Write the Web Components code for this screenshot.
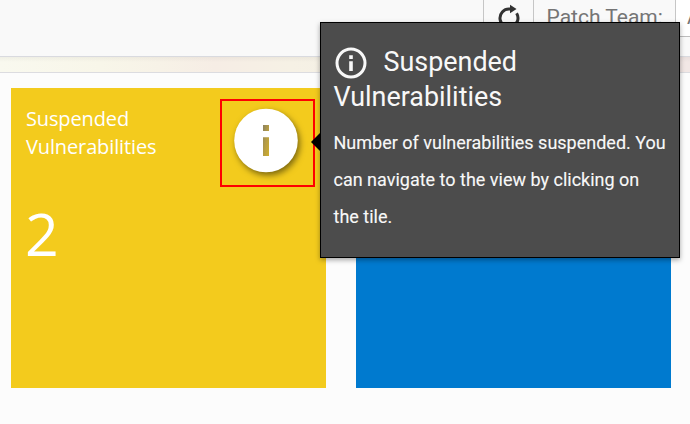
<!DOCTYPE html>
<html lang="en">
<head>
<meta charset="utf-8">
<title>Dashboard</title>
<style>
  html, body { margin: 0; height: 100%; overflow: hidden; }
  body { background: #fcfcfc; font-family: Roboto, sans-serif; }
</style>
</head>
<body>
<vuln-dashboard></vuln-dashboard>

<script>
class DashToolbar extends HTMLElement {
  constructor() {
    super();
    this.attachShadow({ mode: 'open' });
    this.shadowRoot.innerHTML = `
      <style>
        :host {
          display: flex;
          justify-content: flex-end;
          box-sizing: border-box;
          height: 57px;
          overflow: hidden;
          background: #f9f9f9;
          border-bottom: 1px solid #d9dadf;
        }
        .group {
          display: flex;
          box-sizing: border-box;
          height: 37px;
          border-bottom: 1px solid #bdbdbd;
        }
        .refresh, .label, .field { box-sizing: border-box; border-left: 1px solid #c6c6c6; }
        .refresh { width: 50px; }
        .refresh svg { display: block; margin: 4px 0 0 12px; }
        .label {
          width: 142px;
          padding-left: 12.5px;
          font-size: 21px;
          line-height: 34px;
          color: #757575;
          white-space: nowrap;
        }
        .field {
          width: 15px;
          padding-left: 11px;
          overflow: hidden;
          background: #fff;
          font-size: 20px;
          line-height: 35px;
          color: #757575;
        }
      </style>
      <div class="group">
        <div class="refresh">
          <svg width="26" height="26" viewBox="0 0 26 26" fill="none">
            <path d="M16 5.1H13.5A9 9 0 1 0 20.6 9.3" stroke="#333" stroke-width="3"/>
            <path d="M14 .8 20.5 5 14 9.2z" fill="#333"/>
          </svg>
        </div>
        <div class="label"><slot></slot></div>
        <div class="field">A</div>
      </div>
    `;
  }
}

class InfoButton extends HTMLElement {
  constructor() {
    super();
    this.attachShadow({ mode: 'open' });
    this.shadowRoot.innerHTML = `
      <style>
        :host {
          display: block;
          box-sizing: border-box;
          width: 95px;
          height: 88px;
          border: 2px solid #f00;
        }
        svg { display: block; margin: 2px 0 0 5px; overflow: visible; }
        .disc { filter: drop-shadow(2px 3px 3px rgba(0,0,0,.5)); }
      </style>
      <svg width="80" height="80" viewBox="0 0 80 80">
        <defs>
          <linearGradient id="mark" x1="0" y1="0" x2="1" y2="1">
            <stop offset="0" stop-color="#8c8260"/>
            <stop offset=".5" stop-color="#b59c45"/>
            <stop offset="1" stop-color="#d0ae2c"/>
          </linearGradient>
        </defs>
        <circle class="disc" cx="39" cy="37.5" r="31.8" fill="#fff"/>
        <path d="M36 22h6v6h-6zM36 34.3h6V53h-6z" fill="url(#mark)"/>
      </svg>
    `;
  }
}

class MetricTile extends HTMLElement {
  constructor() {
    super();
    this.attachShadow({ mode: 'open' });
    this.shadowRoot.innerHTML = `
      <style>
        :host {
          display: block;
          box-sizing: border-box;
          width: 315px;
          height: 300px;
          padding: 11px 11px 0 15px;
          background: var(--tile-color, #f3cb1d);
          color: #fff;
          font-family: "Open Sans", "Noto Sans", sans-serif;
        }
        .head { display: flex; justify-content: space-between; height: 88px; }
        .title {
          width: 150px;
          padding-top: 6px;
          font-size: 20px;
          line-height: 28px;
          letter-spacing: -.13px;
        }
        .value { margin: 5px 0 0 -1px; font-size: 59px; line-height: 82px; font-weight: 400; }
      </style>
      <div class="head">
        <div class="title"><slot></slot></div>
        <slot name="action"></slot>
      </div>
      <div class="value"><slot name="value"></slot></div>
    `;
  }
}

class InfoTooltip extends HTMLElement {
  constructor() {
    super();
    this.attachShadow({ mode: 'open' });
    this.shadowRoot.innerHTML = `
      <style>
        :host {
          display: block;
          position: absolute;
          box-sizing: border-box;
          width: 360px;
          height: 236px;
          padding: 22px 10px 0 12.5px;
          border: 1px solid #000;
          background: #4c4c4c;
          box-shadow: 0 2px 5px rgba(0,0,0,.35);
          color: #f8f8f8;
        }
        .arrow { position: absolute; left: -10px; top: 109px; }
        .title { font-size: 26.9px; line-height: 35px; }
        .title svg { vertical-align: -8px; margin: 0 15.5px 0 .5px; }
        .body { margin-top: 9px; font-size: 18px; line-height: 37px; -webkit-text-stroke: .12px #f8f8f8; }
      </style>
      <svg class="arrow" width="10" height="20" viewBox="0 0 10 20"><path d="M10 0v20L0 10z"/></svg>
      <div class="title"><svg width="34" height="32" viewBox="0 0 34 32" fill="none"><circle cx="17" cy="16" r="14" stroke="#f8f8f8" stroke-width="3"/><path d="M15.2 8.3h3.6v3.6h-3.6zM15.2 14.3h3.6V24h-3.6z" fill="#f8f8f8"/></svg><slot name="title"></slot></div>
      <div class="body"><slot></slot></div>
    `;
  }
}

class VulnDashboard extends HTMLElement {
  constructor() {
    super();
    this.attachShadow({ mode: 'open' });
    this.shadowRoot.innerHTML = `
      <style>
        :host { display: block; position: relative; width: 690px; height: 424px; overflow: hidden; }
        .strip {
          height: 15px;
          border-bottom: 1px solid #dcdce0;
          background:
            linear-gradient(rgba(0,0,0,.04), transparent 5px),
            linear-gradient(90deg, #f9f9ef 0, #f8f6e9 100px, #f7f2e7 160px, #f6ede5 215px, #f6f1e5 290px, #f5f0e5 330px, #f2e7e5 690px);
        }
        .tiles { display: flex; gap: 30px; padding: 15px 0 0 11px; }
        metric-tile { flex: none; }
        .blue { --tile-color: #007acf; }
        info-tooltip { left: 320px; top: 22px; }
      </style>
      <dash-toolbar>Patch Team:</dash-toolbar>
      <div class="strip"></div>
      <div class="tiles">
        <metric-tile>
          Suspended Vulnerabilities
          <info-button slot="action"></info-button>
          <span slot="value">2</span>
        </metric-tile>
        <metric-tile class="blue"></metric-tile>
      </div>
      <info-tooltip>
        <span slot="title">Suspended Vulnerabilities</span>
        Number of vulnerabilities suspended. You can navigate to the view by clicking on the tile.
      </info-tooltip>
    `;
  }
}

customElements.define('dash-toolbar', DashToolbar);
customElements.define('info-button', InfoButton);
customElements.define('metric-tile', MetricTile);
customElements.define('info-tooltip', InfoTooltip);
customElements.define('vuln-dashboard', VulnDashboard);
</script>
</body>
</html>
